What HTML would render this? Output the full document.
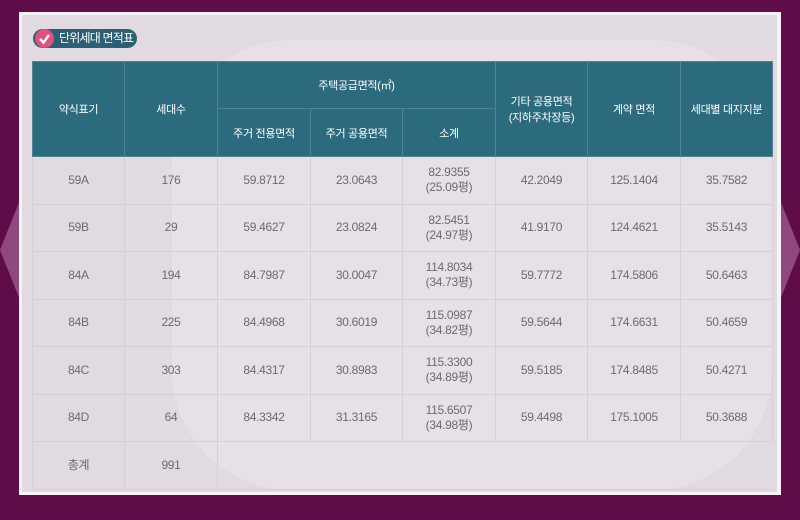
<!DOCTYPE html>
<html><head><meta charset="utf-8"><style>
*{margin:0;padding:0;box-sizing:border-box}
html,body{width:800px;height:520px;overflow:hidden}
body{background:#600c48;position:relative;font-family:"Liberation Sans","Noto Sans CJK KR",sans-serif}
.panel{position:absolute;left:19px;top:12px;width:762px;height:483px;background:#f7f2f5}
.inner{position:absolute;left:22px;top:15px;width:755px;height:477px;background:#e2dae1;overflow:hidden}
.glow{position:absolute;left:150px;top:25px;width:600px;height:450px;border-radius:120px;background:rgba(255,255,255,0.18)}
.badge{position:absolute;left:33px;top:29px;width:104px;height:19px;border-radius:10px;background:#2a5f74;color:#fff;font-size:12px;line-height:19px;padding-left:26px;letter-spacing:-0.8px;white-space:nowrap}
.chk{position:absolute;left:35px;top:29px;width:19px;height:19px;border-radius:50%;background:#e0527e}
table{position:absolute;left:32px;top:61px;width:740px;border-collapse:collapse;table-layout:fixed}
th{background:#2c6b7d;color:#fff;font-weight:normal;font-size:11px;border:1px solid #4e8493;letter-spacing:-0.3px}
td{color:#6f6a70;font-size:12px;text-align:center;border:1px solid #d8cfd6;height:47.5px;line-height:15px;letter-spacing:-0.3px;padding:0}
</style></head><body>
<svg style="position:absolute;left:0;top:0" width="800" height="520"><polygon points="0,250 20,200 20,300" fill="#9a5a8a" opacity="0.8"/><polygon points="800,250 780,200 780,300" fill="#9a5a8a" opacity="0.8"/></svg>
<div class="panel"></div>
<div class="inner"><div class="glow"></div></div>
<div class="badge">단위세대 면적표</div>
<div class="chk"><svg width="19" height="19"><path d="M5 10 L8.5 13.5 L14 6" stroke="#fff" stroke-width="2.5" fill="none"/></svg></div>
<table>
<colgroup><col width="92"><col width="93"><col width="93"><col width="92"><col width="93"><col width="92"><col width="93"><col width="92"></colgroup>
<tr style="height:47px"><th rowspan="2">약식표기</th><th rowspan="2">세대수</th><th colspan="3">주택공급면적(㎡)</th><th rowspan="2">기타 공용면적<br>(지하주차장등)</th><th rowspan="2">계약 면적</th><th rowspan="2">세대별 대지지분</th></tr>
<tr style="height:48px"><th>주거 전용면적</th><th>주거 공용면적</th><th>소계</th></tr>
<tr><td>59A</td><td>176</td><td>59.8712</td><td>23.0643</td><td>82.9355<br>(25.09평)</td><td>42.2049</td><td>125.1404</td><td>35.7582</td></tr>
<tr><td>59B</td><td>29</td><td>59.4627</td><td>23.0824</td><td>82.5451<br>(24.97평)</td><td>41.9170</td><td>124.4621</td><td>35.5143</td></tr>
<tr><td>84A</td><td>194</td><td>84.7987</td><td>30.0047</td><td>114.8034<br>(34.73평)</td><td>59.7772</td><td>174.5806</td><td>50.6463</td></tr>
<tr><td>84B</td><td>225</td><td>84.4968</td><td>30.6019</td><td>115.0987<br>(34.82평)</td><td>59.5644</td><td>174.6631</td><td>50.4659</td></tr>
<tr><td>84C</td><td>303</td><td>84.4317</td><td>30.8983</td><td>115.3300<br>(34.89평)</td><td>59.5185</td><td>174.8485</td><td>50.4271</td></tr>
<tr><td>84D</td><td>64</td><td>84.3342</td><td>31.3165</td><td>115.6507<br>(34.98평)</td><td>59.4498</td><td>175.1005</td><td>50.3688</td></tr>
<tr><td>총계</td><td>991</td><td colspan="6" style="border-right:none"></td></tr>
</table>
</body></html>
